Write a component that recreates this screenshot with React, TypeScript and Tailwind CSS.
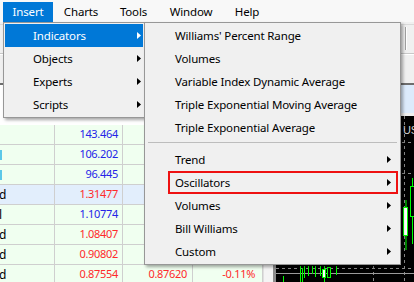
import React from "react";

function Arrow({ white = false }: { white?: boolean }) {
  return (
    <svg width="4" height="7" viewBox="0 0 4 7" className="block">
      <path d="M0 0 L4 3.5 L0 7 Z" fill={white ? "#ffffff" : "#000000"} />
    </svg>
  );
}

type Row = {
  c1: "" | "cyan" | "d" | "l";
  bid: string;
  bidColor: string;
  ask?: string;
  chg?: string;
  hl?: boolean;
};

const BLUE = "text-[#2424e8]";
const RED = "text-[#ff2a2a]";

const rows: Row[] = [
  { c1: "", bid: "143.464", bidColor: BLUE },
  { c1: "cyan", bid: "106.202", bidColor: BLUE },
  { c1: "cyan", bid: "96.445", bidColor: BLUE },
  { c1: "d", bid: "1.31477", bidColor: RED, hl: true },
  { c1: "l", bid: "1.10774", bidColor: BLUE },
  { c1: "d", bid: "1.08407", bidColor: RED },
  { c1: "d", bid: "0.90802", bidColor: RED },
  { c1: "d", bid: "0.87554", bidColor: RED, ask: "0.87620", chg: "-0.11%" },
];

function TableRow({ r }: { r: Row }) {
  const bg = r.hl ? "bg-[#e2eefc]" : "bg-[#f0fff0]";
  return (
    <div className={`flex h-[20px] shrink-0 border-b border-[#cfcfcf] ${bg}`}>
      <div className="w-[55px] border-r border-[#cfcfcf] flex items-center overflow-hidden">
        {r.c1 === "cyan" && <span className="block w-[2px] h-[10px] bg-[#5cc8e8]" />}
        {(r.c1 === "d" || r.c1 === "l") && (
          <span className="-ml-[1px] text-black leading-none text-[12px]">{r.c1}</span>
        )}
      </div>
      <div className={`w-[68px] border-r border-[#cfcfcf] flex items-center justify-end pr-[4px] ${r.bidColor}`}>
        {r.bid}
      </div>
      <div className={`w-[70px] border-r border-[#cfcfcf] flex items-center justify-end pr-[5px] ${RED}`}>
        {r.ask}
      </div>
      <div className={`w-[70px] border-r border-[#cfcfcf] flex items-center justify-end pr-[7px] ${RED}`}>
        {r.chg}
      </div>
    </div>
  );
}

function Chart() {
  const green = "#00ff00";
  return (
    <svg width="138" height="166" viewBox="0 0 138 166" className="block">
      <rect x="0" y="0" width="138" height="166" fill="#000" />
      <line x1="128.5" y1="0" x2="128.5" y2="166" stroke="#8a8a8a" strokeDasharray="3 3" />
      <line x1="97.5" y1="0" x2="97.5" y2="166" stroke="#8a8a8a" strokeDasharray="3 3" />
      <line x1="0" y1="26.5" x2="138" y2="26.5" stroke="#8a8a8a" strokeDasharray="3 3" />
      <line x1="0" y1="57.5" x2="138" y2="57.5" stroke="#8a8a8a" strokeDasharray="3 3" />
      <line x1="0" y1="152.5" x2="138" y2="152.5" stroke="#8a8a8a" strokeDasharray="3 3" />
      <line x1="0" y1="157.5" x2="138" y2="157.5" stroke="#9a9a9a" />
      <text x="127" y="18" fill="#d0d0d0" fontSize="11" fontFamily="Liberation Sans, sans-serif">USDCHF</text>
      <line x1="130" y1="84" x2="130" y2="134" stroke={green} />
      <rect x="127.5" y="91.5" width="4" height="28" fill="#fff" stroke={green} />
      <line x1="136.5" y1="62" x2="136.5" y2="128" stroke={green} />
      <rect x="134.5" y="70.5" width="4" height="30" fill="#000" stroke={green} />
      <line x1="7.5" y1="160" x2="7.5" y2="166" stroke={green} />
      <line x1="24.5" y1="150" x2="24.5" y2="166" stroke={green} />
      <line x1="26.5" y1="152" x2="26.5" y2="166" stroke={green} />
      <line x1="28.5" y1="150" x2="28.5" y2="162" stroke={green} />
      <line x1="32.5" y1="150" x2="32.5" y2="160" stroke={green} />
      <line x1="36.5" y1="150" x2="36.5" y2="158" stroke={green} />
      <line x1="39.5" y1="150" x2="39.5" y2="161" stroke={green} />
      <line x1="44.5" y1="150" x2="44.5" y2="160" stroke={green} />
      <line x1="48.5" y1="150" x2="48.5" y2="166" stroke={green} />
      <rect x="46.5" y="153.5" width="3" height="8" fill="#fff" stroke={green} />
      <rect x="51.5" y="151.5" width="3" height="10" fill="#000" stroke={green} />
      <line x1="60.5" y1="150" x2="60.5" y2="159" stroke={green} />
    </svg>
  );
}

export default function App() {
  const submenuTop = [
    "Williams' Percent Range",
    "Volumes",
    "Variable Index Dynamic Average",
    "Triple Exponential Moving Average",
    "Triple Exponential Average",
  ];
  const submenuBottom = ["Trend", "Oscillators", "Volumes", "Bill Williams", "Custom"];

  return (
    <div className="relative w-[414px] h-[282px] overflow-hidden bg-[#f0f0f0] font-['Noto_Sans',sans-serif] text-[11.5px] tracking-[-0.15px] text-black">
      {/* Menu bar */}
      <div className="h-[22px] bg-[#f8f8f8] flex items-end pl-[3px]">
        <div className="w-[50px] h-[20px] bg-[#0078d7] text-white flex items-center justify-center">Insert</div>
        <div className="w-[56px] h-[20px] flex items-center justify-center">Charts</div>
        <div className="w-[49px] h-[20px] flex items-center justify-center">Tools</div>
        <div className="w-[66px] h-[20px] flex items-center justify-center">Window</div>
        <div className="w-[46px] h-[20px] flex items-center justify-center">Help</div>
      </div>

      {/* Toolbar */}
      <div className="h-[61px] bg-[#f0f0f0] flex flex-col">
        <div className="h-[3px] border-b border-[#dadada]" />
        <div className="h-[28px] flex justify-end pr-[7px] pt-[2px]">
          <div className="w-[2px] h-[23px] border-l border-[#a0a0a0] border-r border-r-white" />
        </div>
        <div className="h-[1px] bg-[#c8c8c8]" />
        <div className="h-[1px] bg-white" />
      </div>
      <div className="h-[2px] bg-[#6e6e6e]" />

      {/* Main area */}
      <div className="flex h-[197px]">
        <div className="w-[263px] flex flex-col bg-white">
          <div className="h-[40px] shrink-0 bg-white" />
          <div className="flex flex-col text-[11px] tracking-[-0.3px]">
            {rows.map((r, i) => (
              <TableRow key={i} r={r} />
            ))}
          </div>
        </div>
        <div className="w-[10px] bg-[#f4f4f4] border-l border-[#e0e0e0]" />
        <div className="w-[3px] bg-[#8c8c8c]" />
        <div className="flex-1 flex flex-col">
          <div className="h-[28px] bg-[#dcebfc]" />
          <div className="h-[3px] bg-[#f0f0f0]" />
          <div className="flex-1 overflow-hidden bg-black">
            <Chart />
          </div>
        </div>
      </div>

      {/* Insert dropdown */}
      <div className="absolute left-[3px] top-[22px] w-[142px] bg-[#f0f0f0] border border-[#979797] p-[1px] shadow-[2px_2px_3px_rgba(0,0,0,0.35)]">
        {["Indicators", "Objects", "Experts", "Scripts"].map((t, i) => (
          <div
            key={t}
            className={`h-[23px] flex items-center justify-between pl-[28px] pr-[2px] ${i === 0 ? "bg-[#0078d7] text-white" : ""}`}
          >
            <span>{t}</span>
            <Arrow white={i === 0} />
          </div>
        ))}
      </div>

      {/* Indicators submenu */}
      <div className="absolute left-[144px] top-[22px] w-[257px] bg-[#f0f0f0] border border-[#979797] p-[1px] shadow-[2px_2px_3px_rgba(0,0,0,0.35)]">
        {submenuTop.map((t) => (
          <div key={t} className="h-[23px] flex items-center pl-[29px]">
            {t}
          </div>
        ))}
        <div className="h-[9px] pt-[3px] px-[2px]">
          <div className="h-[1px] bg-[#bdbdbd]" />
        </div>
        {submenuBottom.map((t) => (
          <div key={t} className="relative h-[23px] flex items-center justify-between pl-[29px] pr-[8px]">
            <span>{t}</span>
            <Arrow />
            {t === "Oscillators" && (
              <span className="absolute left-[22px] right-[1px] top-0 bottom-0 border-2 border-[#ee1111]" />
            )}
          </div>
        ))}
      </div>
    </div>
  );
}
